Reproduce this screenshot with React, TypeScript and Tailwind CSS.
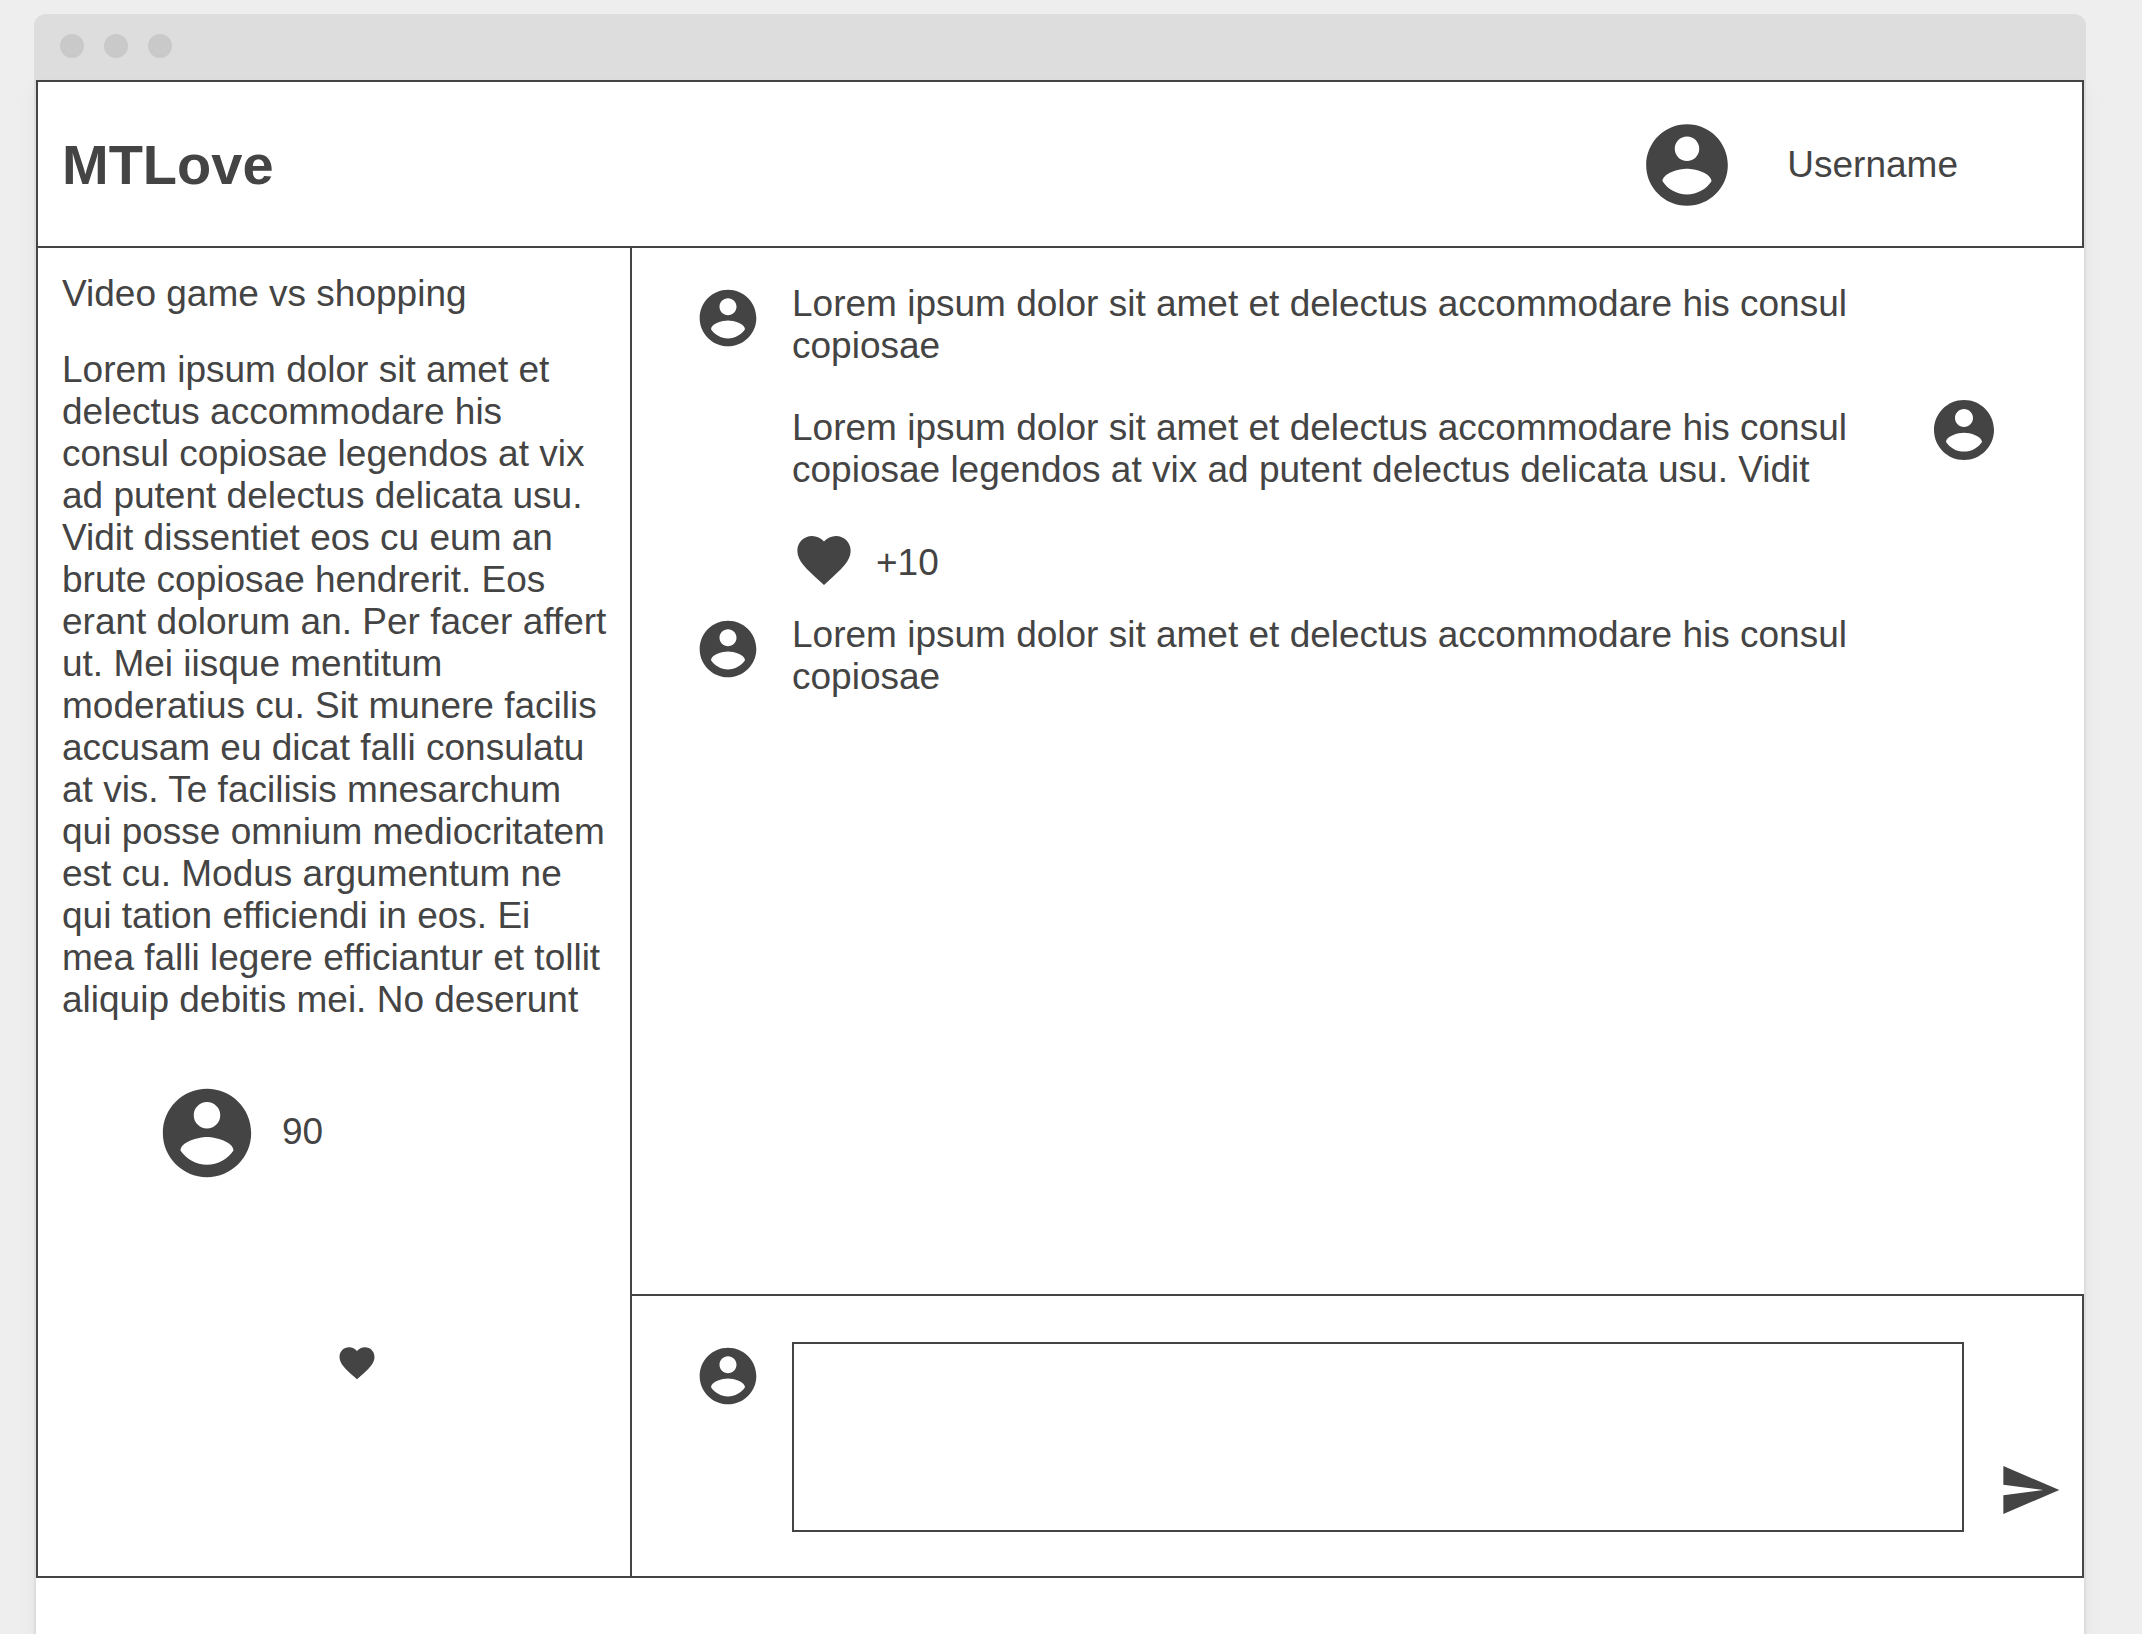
type IconProps = { className?: string };

function AccountIcon({ className }: IconProps) {
  return (
    <svg viewBox="0 0 24 24" fill="currentColor" aria-hidden="true" className={className}>
      <path d="M12 2C6.48 2 2 6.48 2 12s4.48 10 10 10 10-4.48 10-10S17.52 2 12 2zm0 3c1.66 0 3 1.34 3 3s-1.34 3-3 3-3-1.34-3-3 1.34-3 3-3zm0 14.2c-2.5 0-4.71-1.28-6-3.22.03-1.99 4-3.08 6-3.08 1.99 0 5.97 1.09 6 3.08-1.29 1.94-3.5 3.22-6 3.22z" />
    </svg>
  );
}

function HeartIcon({ className }: IconProps) {
  return (
    <svg viewBox="0 0 24 24" fill="currentColor" aria-hidden="true" className={className}>
      <path d="M12 21.35l-1.45-1.32C5.4 15.36 2 12.28 2 8.5 2 5.42 4.42 3 7.5 3c1.74 0 3.41.81 4.5 2.09C13.09 3.81 14.76 3 16.5 3 19.58 3 22 5.42 22 8.5c0 3.78-3.4 6.86-8.55 11.54L12 21.35z" />
    </svg>
  );
}

function SendIcon({ className }: IconProps) {
  return (
    <svg viewBox="0 0 24 24" fill="currentColor" aria-hidden="true" className={className}>
      <path d="M2.01 21L23 12 2.01 3 2 10l15 2-15 2z" />
    </svg>
  );
}

function TitleBar() {
  return (
    <div className="flex h-[66px] items-center gap-5 rounded-t-xl bg-[#ddd] px-[26px] pb-[2px]">
      <span className="size-6 rounded-full bg-[#c9c9c9]" />
      <span className="size-6 rounded-full bg-[#c9c9c9]" />
      <span className="size-6 rounded-full bg-[#c9c9c9]" />
    </div>
  );
}

function Header() {
  return (
    <header className="flex items-center border-2 border-[#444] pt-[34px] pr-[124px] pb-8 pl-6">
      <h1 className="text-[56px] leading-[64px] font-bold">MTLove</h1>
      <div className="ml-auto flex items-center gap-[51px]">
        <AccountIcon className="size-[98px]" />
        <span>Username</span>
      </div>
    </header>
  );
}

function Sidebar() {
  return (
    <aside className="w-[596px] shrink-0 border-x-2 border-b-2 border-[#444] pt-[25px] pr-5 pl-6">
      <h2>Video game vs shopping</h2>
      <p className="mt-[34px]">
        Lorem ipsum dolor sit amet et delectus accommodare his consul copiosae legendos at vix ad
        putent delectus delicata usu. Vidit dissentiet eos cu eum an brute copiosae hendrerit. Eos
        erant dolorum an. Per facer affert ut. Mei iisque mentitum moderatius cu. Sit munere facilis
        accusam eu dicat falli consulatu at vis. Te facilisis mnesarchum qui posse omnium
        mediocritatem est cu. Modus argumentum ne qui tation efficiendi in eos. Ei mea falli legere
        efficiantur et tollit aliquip debitis mei. No deserunt
      </p>
      <div className="mt-[59px] ml-[92px] flex items-center gap-[22px]">
        <AccountIcon className="size-[106px]" />
        <span className="pb-0.5">90</span>
      </div>
      <button type="button" aria-label="Like" className="mt-[156px] ml-[274px] block">
        <HeartIcon className="size-[42px]" />
      </button>
    </aside>
  );
}

function IncomingMessage({ text }: { text: string }) {
  return (
    <li className="flex items-start gap-[30px] pr-[104px]">
      <AccountIcon className="mt-px size-[68px] shrink-0" />
      <p className="flex-1">{text}</p>
    </li>
  );
}

function Messages() {
  return (
    <ul className="flex min-h-[1046px] flex-1 flex-col pt-[35px] pr-[84px] pl-[62px]">
      <IncomingMessage text="Lorem ipsum dolor sit amet et delectus accommodare his consul copiosae" />
      <li className="mt-[27px] flex items-start gap-8 pl-[98px]">
        <p className="flex-1 pt-[13px]">
          Lorem ipsum dolor sit amet et delectus accommodare his consul copiosae legendos at vix ad
          putent delectus delicata usu. Vidit
        </p>
        <AccountIcon className="size-[72px] shrink-0" />
      </li>
      <li className="mt-[37px] mb-[22px] flex items-center gap-5 pl-[98px]">
        <HeartIcon className="size-16" />
        <span className="pt-1.5">+10</span>
      </li>
      <IncomingMessage text="Lorem ipsum dolor sit amet et delectus accommodare his consul copiosae" />
    </ul>
  );
}

function Composer() {
  return (
    <form
      className="flex items-start border-y-2 border-r-2 border-[#444] pt-[46px] pr-5 pb-11 pl-[62px]"
      onSubmit={(event) => event.preventDefault()}
    >
      <AccountIcon className="size-[68px] shrink-0" />
      <textarea
        rows={4}
        aria-label="Message"
        className="mr-[34px] ml-[30px] block min-w-0 flex-1 resize-none border-2 border-[#444] bg-white px-4 py-[9px] outline-none"
      />
      <button type="submit" aria-label="Send" className="mb-2.5 self-end">
        <SendIcon className="size-16" />
      </button>
    </form>
  );
}

export default function App() {
  return (
    <div className="flex min-h-screen flex-col bg-[#eee] pt-3.5 pr-14 pl-[34px] font-['Liberation_Sans',Arial,sans-serif] text-[37px] leading-[42px] text-[#444]">
      <TitleBar />
      <div className="flex flex-1 flex-col border-x-2 border-[#ddd] bg-white shadow-[0_8px_16px_rgba(0,0,0,0.05)]">
        <Header />
        <main className="flex">
          <Sidebar />
          <section className="flex min-w-0 flex-1 flex-col">
            <Messages />
            <Composer />
          </section>
        </main>
      </div>
    </div>
  );
}
